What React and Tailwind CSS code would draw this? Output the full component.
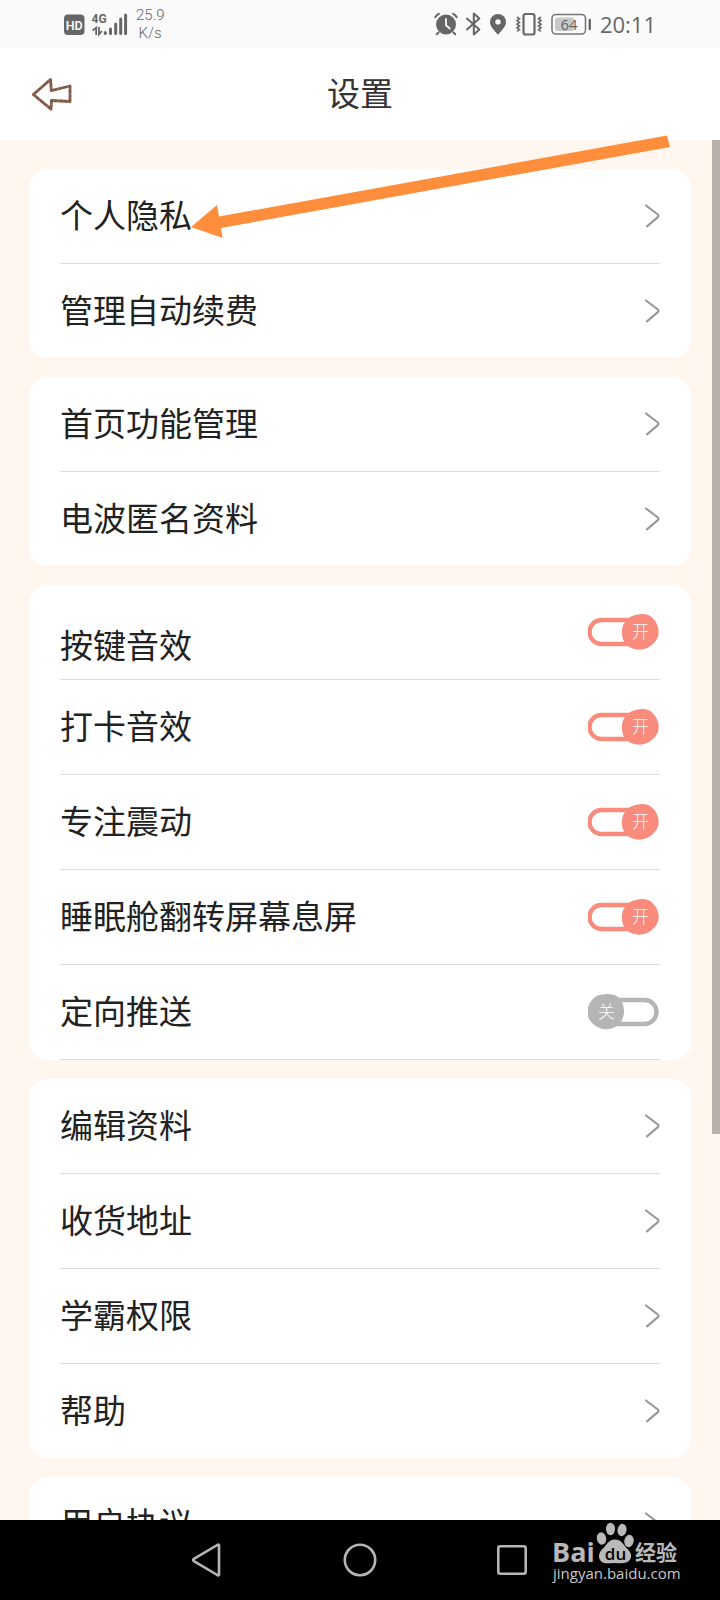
import React, { useState } from 'react';

const linkGroups = [
  ['个人隐私', '管理自动续费'],
  ['首页功能管理', '电波匿名资料'],
];

const moreGroups = [
  ['编辑资料', '收货地址', '学霸权限', '帮助'],
  ['用户协议'],
];

const switchItems = [
  { id: 'key-sound', label: '按键音效', low: true },
  { id: 'punch-sound', label: '打卡音效' },
  { id: 'focus-vibrate', label: '专注震动' },
  { id: 'sleep-screen', label: '睡眠舱翻转屏幕息屏' },
  { id: 'push', label: '定向推送' },
];

const StatusBar = () => (
  <div className="flex h-12 shrink-0 items-center justify-between bg-[#fafafa] px-16 text-[#666]">
    <div className="flex items-center">
      <svg width="64" height="26" viewBox="0 0 64 26" aria-label="HD 4G">
        <rect x="0" y="3.5" width="20.5" height="20.5" rx="4" fill="#666" />
        <text x="10.2" y="18.6" textAnchor="middle" fontSize="12.5" fontWeight="600" fontFamily="Roboto, sans-serif" fill="#fafafa">HD</text>
        <text x="27.500" y="12" fontSize="12" fontWeight="700" fontFamily="Roboto, sans-serif" fill="#666">4G</text>
        <path d="M32.2 24V16.6L28.6 19.6M35 16v7.4l2.8-3.4" fill="none" stroke="#666" strokeWidth="1.8" />
        <path d="M41.3 21.5v1M46.5 18v4.5M51.7 13v9.5M56.7 8v14.5M61.6 4v18.5" stroke="#666" strokeWidth="3" strokeLinecap="round" />
      </svg>
      <div className="ml-2 w-7 text-center font-['Roboto',sans-serif] text-[15px] leading-[18px] font-light">
        <div>25.9</div>
        <div>K/s</div>
      </div>
    </div>
    <div className="flex items-center gap-2">
      <svg width="24" height="24" viewBox="0 0 24 24" aria-label="Alarm">
        <circle cx="12" cy="12.5" r="10" fill="#666" />
        <path d="M1.3 5.2Q2.5 3 4.8 1.8M22.7 5.2Q21.5 3 19.2 1.8M4.5 20.5L2.8 22.3M19.5 20.5l1.7 1.8" fill="none" stroke="#666" strokeWidth="2" strokeLinecap="round" />
        <path d="M12 7v6.3l3.8 3.2" fill="none" stroke="#fafafa" strokeWidth="1.8" strokeLinecap="round" />
      </svg>
      <svg width="15" height="24" viewBox="0 0 15 24" aria-label="Bluetooth">
        <path d="M1 6.5l12.3 11L7.8 22.5V1.5l5.5 5L1 17.5" fill="none" stroke="#666" strokeWidth="2" strokeLinejoin="round" strokeLinecap="round" />
      </svg>
      <svg width="18" height="24" viewBox="0 0 18 24" aria-label="Location">
        <path fillRule="evenodd" d="M9 2a8 8 0 0 1 8 8c0 4.6-4.5 8.6-8 12.8C5.5 18.6 1 14.6 1 10a8 8 0 0 1 8-8zm0 5.2a2.7 2.7 0 1 0 0 5.4 2.7 2.7 0 0 0 0-5.4z" fill="#666" />
      </svg>
      <svg width="28" height="24" viewBox="0 0 28 24" aria-label="Vibrate">
        <rect x="8.500" y="2" width="11" height="20.5" rx="2" fill="none" stroke="#666" strokeWidth="2.200" />
        <path d="M2 5l2.500 1.800L2 8.600l2.500 1.800L2 12.200 4.500 14 2 15.800l2.500 1.800L2 19.400M26 5l-2.500 1.800L26 8.600l-2.500 1.800 2.500 1.800-2.500 1.800 2.500 1.800-2.500 1.800 2.500 1.800" fill="none" stroke="#666" strokeWidth="1.6" />
      </svg>
      <svg width="41" height="24" viewBox="0 0 41 24" aria-label="Battery 64%">
        <rect x="1" y="2.5" width="33.500" height="19.5" rx="4" fill="none" stroke="#777" strokeWidth="1.6" />
        <rect x="4" y="5.5" width="19" height="13.5" rx="2" fill="#c8c8c8" />
        <path d="M38.8 8v9" stroke="#666" strokeWidth="2.4" strokeLinecap="round" />
        <text x="18" y="17.8" textAnchor="middle" fontSize="15" fontFamily="Open Sans, sans-serif" fill="#666">64</text>
      </svg>
      <span className="font-['Open_Sans',sans-serif] text-[22px] leading-6">20:11</span>
    </div>
  </div>
);

const Header = () => (
  <header className="grid h-[92px] shrink-0 grid-cols-3 items-center bg-white px-8">
    <button type="button" aria-label="返回" className="justify-self-start">
      <svg width="40" height="34" viewBox="0 0 40 34">
        <path d="M1.3 17.5L18.500 2.500l.8 11.200L38 9v15.500l-18.500-1-.5 8.700z" fill="none" stroke="#7d5544" strokeWidth="2.8" strokeLinejoin="round" />
        <path d="M1.3 17.5L18.500 2.500l.8 11.200L38 9v15.500l-18.500-1-.5 8.700z" fill="none" stroke="#b08b7a" strokeWidth="0.9" strokeDasharray="2 3 1 4" />
      </svg>
    </button>
    <h1 className="pb-1 text-center text-[33px] leading-10 text-[#333]">设置</h1>
  </header>
);

const Chevron = () => (
  <svg width="15" height="24" viewBox="0 0 15 24" aria-hidden="true">
    <path d="M1 1.5L12.800 10.500q1.400 1.300 0 2.600L2 22.300" fill="none" stroke="#999" strokeWidth="2.2" strokeLinecap="round" />
  </svg>
);

const Card = ({ children }) => (
  <section className="rounded-[19px] bg-white px-[31px]">{children}</section>
);

const LinkCard = ({ items }) => (
  <Card>
    <ul className="divide-y divide-[#ddd]">
      {items.map((item) => (
        <li key={item}>
          <a href="#" className="flex h-[94px] items-center justify-between">
            <span className="pb-1">{item}</span>
            <Chevron />
          </a>
        </li>
      ))}
    </ul>
  </Card>
);

const SwitchArt = ({ on }) => {
  const color = on ? '#f88b7b' : '#b5b5b5';
  return (
    <svg width="72" height="38" viewBox="1 0 72 38" aria-hidden="true">
      <rect x="2.5" y="7" width="67" height="24" rx="12" fill="#fff" stroke={color} strokeWidth="4.4" />
      <path
        d={on
          ? 'M53 1.200c5-.9 9.500.5 12.500 3.800 4 3.500 6 8.500 5.500 14-.5 7-4 12.500-9.500 15.300-5 2.800-11 3-16 1.200C39 33 35.200 28 35 21c-.5-4.500.3-9 3.500-12.500C41.500 4 47 1.500 53 1.200z'
          : 'M16 1.500c5-1 11-.5 15 2.500 4 3 6 8.500 6 14.500 0 6-2.500 11.500-7.500 14.800-5 3.200-11.500 4-17 1.700C6 32.500 1.500 27 1 20 .5 13.500 3 8 7.500 4.500 10 2.500 12.500 1.500 16 1.500z'}
        fill={color}
      />
      <text x={on ? 53.500 : 19.500} y="25" textAnchor="middle" fontSize="17" fontWeight="300" fontFamily="Noto Sans CJK SC, sans-serif" fill="#fff">
        {on ? '开' : '关'}
      </text>
    </svg>
  );
};

const Watermark = () => (
  <svg className="absolute top-0 right-[36px]" width="132" height="68" viewBox="0 0 132 68" aria-label="Baidu 经验">
    <g fill="#b9b9b9">
      <text x="0" y="42" fontSize="27" fontWeight="700" fontFamily="Open Sans, sans-serif">Bai</text>
      <ellipse cx="49.5" cy="18.5" rx="4.7" ry="6.2" transform="rotate(-12 49.5 18.5)" />
      <ellipse cx="58.5" cy="9" rx="4.5" ry="6.2" />
      <ellipse cx="70" cy="10" rx="4.5" ry="6.2" transform="rotate(10 70 10)" />
      <ellipse cx="77" cy="21" rx="4.7" ry="6.2" transform="rotate(12 77 21)" />
      <path d="M63 19.5c6 0 8.500 5 12 9 4 3.800 5 7 3.300 10.500-2.300 4.500-8 4.500-15.300 4-7 .5-12.500 1-15-3-2-3.500-1-8 3-11.500 3.700-4 6-9 12-9z" />
      <text x="83" y="40" fontSize="21" fontWeight="700" fontFamily="Noto Sans CJK SC, sans-serif">经验</text>
      <text x="1" y="59" fontSize="15" fontFamily="Open Sans, sans-serif" fill="#c8c8c8">jingyan.baidu.com</text>
    </g>
    <text x="63.5" y="39.500" textAnchor="middle" fontSize="17" fontWeight="600" fontFamily="Open Sans, sans-serif" fill="#000">du</text>
  </svg>
);

const NavBar = () => (
  <nav className="relative flex h-20 shrink-0 items-center justify-center gap-[119px] bg-black">
    <button type="button" aria-label="Back">
      <svg width="34" height="34" viewBox="0 0 34 34">
        <path d="M29 2.5v29a.8.8 0 0 1-1.300.7L3.500 17.800a1 1 0 0 1 0-1.600L27.700 1.800a.8.8 0 0 1 1.300.7z" fill="none" stroke="#b5b5b5" strokeWidth="2.6" />
      </svg>
    </button>
    <button type="button" aria-label="Home">
      <svg width="34" height="34" viewBox="0 0 34 34">
        <circle cx="17" cy="17" r="15.2" fill="none" stroke="#b5b5b5" strokeWidth="2.6" />
      </svg>
    </button>
    <button type="button" aria-label="Recents">
      <svg width="34" height="34" viewBox="0 0 34 34">
        <rect x="2.3" y="3.3" width="27.4" height="27.4" rx="2" fill="none" stroke="#b5b5b5" strokeWidth="2.6" />
      </svg>
    </button>
    <Watermark />
  </nav>
);

const App = () => {
  const [switches, setSwitches] = useState({
    'key-sound': true,
    'punch-sound': true,
    'focus-vibrate': true,
    'sleep-screen': true,
    push: false,
  });

  const toggle = (id) => setSwitches((prev) => ({ ...prev, [id]: !prev[id] }));

  return (
    <div className="relative flex h-screen flex-col bg-[#fff7ef] font-['Noto_Sans_CJK_SC',sans-serif] text-[#222]">
      <StatusBar />
      <Header />

      <div className="relative min-h-0 flex-1">
        <main className="flex h-full flex-col gap-[19px] overflow-y-auto px-[29px] pt-[29px] text-[33px] leading-10 [scrollbar-width:none]">
          {linkGroups.map((items) => (
            <LinkCard key={items[0]} items={items} />
          ))}

          <Card>
            <ul>
              {switchItems.map(({ id, label, low }) => (
                <li key={id} className="border-b border-[#ddd]">
                  <label htmlFor={id} className="relative flex h-[94px] items-center justify-between">
                    <span className={low ? 'pt-7 pb-1' : 'pb-1'}>{label}</span>
                    <input
                      id={id}
                      type="checkbox"
                      className="sr-only"
                      checked={switches[id]}
                      onChange={() => toggle(id)}
                    />
                    <SwitchArt on={switches[id]} />
                  </label>
                </li>
              ))}
            </ul>
          </Card>

          {moreGroups.map((items) => (
            <LinkCard key={items[0]} items={items} />
          ))}
        </main>
        <div className="absolute top-0 right-0 h-[72%] w-2 bg-[#b6b2ab]" />
      </div>

      <NavBar />

      {/* pointer to the privacy row */}
      <svg className="pointer-events-none absolute top-[130px] left-[188px]" width="484" height="112" viewBox="0 0 484 112" aria-hidden="true">
        <path d="M3 97L29 75l2 11.500L479 5.500l3 11.500L33 98l1.500 10z" fill="#fe8e3c" />
      </svg>
    </div>
  );
};

export default App;
